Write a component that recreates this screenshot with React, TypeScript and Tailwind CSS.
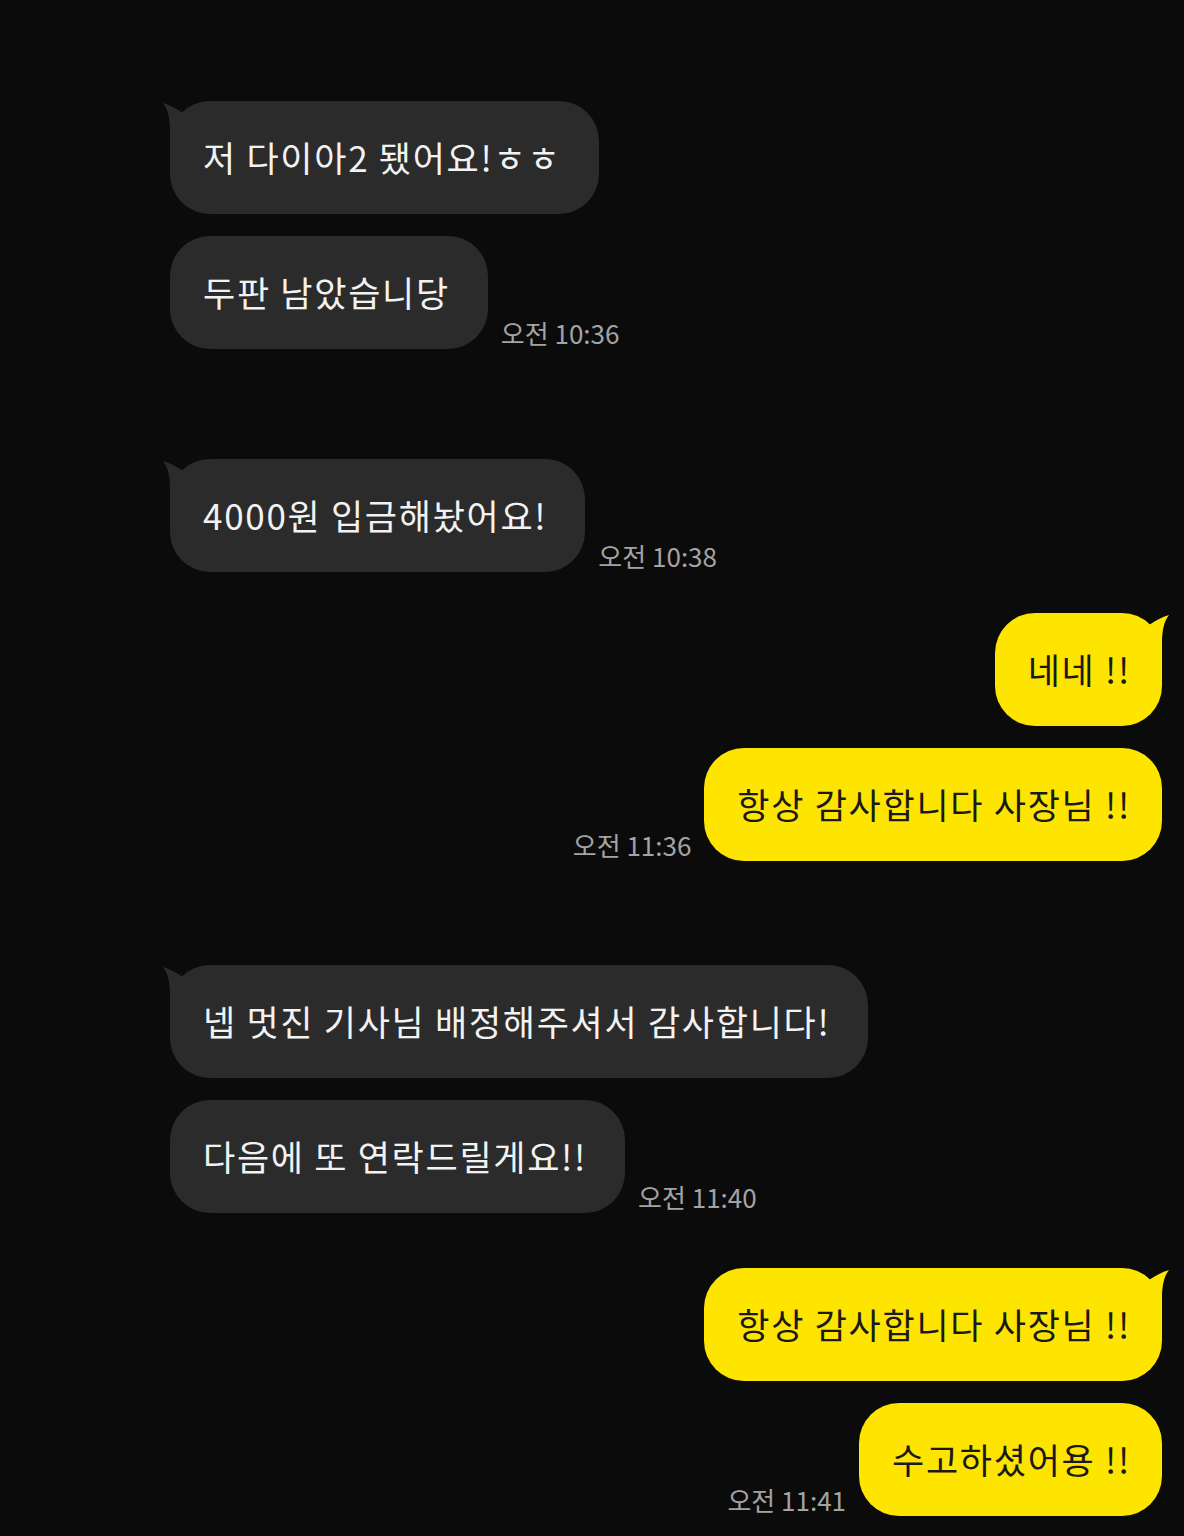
import React from 'react';

type Msg = { text: string; tail?: boolean; time?: string };
type Group = { side: 'left' | 'right'; mt: string; items: Msg[] };

const groups: Group[] = [
    {
        side: 'left',
        mt: 'mt-[101px]',
        items: [
            { text: '저 다이아2 됐어요!ㅎㅎ', tail: true },
            { text: '두판 남았습니당', time: '오전 10:36' },
        ],
    },
    {
        side: 'left',
        mt: 'mt-[110px]',
        items: [{ text: '4000원 입금해놨어요!', tail: true, time: '오전 10:38' }],
    },
    {
        side: 'right',
        mt: 'mt-[41px]',
        items: [
            { text: '네네 !!', tail: true },
            { text: '항상 감사합니다 사장님 !!', time: '오전 11:36' },
        ],
    },
    {
        side: 'left',
        mt: 'mt-[104px]',
        items: [
            { text: '넵 멋진 기사님 배정해주셔서 감사합니다!', tail: true },
            { text: '다음에 또 연락드릴게요!!', time: '오전 11:40' },
        ],
    },
    {
        side: 'right',
        mt: 'mt-[55px]',
        items: [
            { text: '항상 감사합니다 사장님 !!', tail: true },
            { text: '수고하셨어용 !!', time: '오전 11:41' },
        ],
    },
];

const Tail = ({ side }: { side: 'left' | 'right' }) => (
    <svg
        width="28"
        height="44"
        viewBox="0 0 28 44"
        className={
            side === 'left'
                ? 'absolute -left-[8px] top-0 fill-[#2b2b2b]'
                : 'absolute -right-[8px] top-0 fill-[#fee500] -scale-x-100'
        }
    >
        <path d="M1 2 C8 4 15 8 21 12 L28 6 L28 44 L8 44 L8 30 C8 18 6 8 1 2 Z" />
    </svg>
);

const Bubble = ({ msg, side }: { msg: Msg; side: 'left' | 'right' }) => (
    <div
        className={`relative h-[113px] rounded-[40px] flex items-center whitespace-nowrap text-[35px] tracking-[1.7px] ${
            side === 'left'
                ? 'bg-[#2b2b2b] text-[#f2f2f2] pl-[33px] pr-[38px]'
                : 'bg-[#fee500] text-[#1a1a1a] pl-[33px] pr-[31px]'
        }`}
    >
        {msg.tail && <Tail side={side} />}
        <span className="relative">{msg.text}</span>
    </div>
);

const Time = ({ t }: { t: string }) => (
    <span className="text-[26px] leading-none text-[#a3a3a3] pb-[3px] whitespace-nowrap">{t}</span>
);

export default function App() {
    return (
        <div
            className="w-[1184px] h-[1536px] bg-[#0b0b0b] overflow-hidden flex flex-col"
            style={{ fontFamily: '"Noto Sans CJK KR", "Noto Sans", sans-serif' }}
        >
            {groups.map((g, gi) => (
                <div key={gi} className={`${g.mt} flex flex-col gap-[22px] ${g.side === 'left' ? 'pl-[170px] items-start' : 'pr-[22px] items-end'}`}>
                    {g.items.map((m, mi) => (
                        <div key={mi} className="flex items-end gap-[13px]">
                            {g.side === 'right' && m.time && <Time t={m.time} />}
                            <Bubble msg={m} side={g.side} />
                            {g.side === 'left' && m.time && <Time t={m.time} />}
                        </div>
                    ))}
                </div>
            ))}
        </div>
    );
}
